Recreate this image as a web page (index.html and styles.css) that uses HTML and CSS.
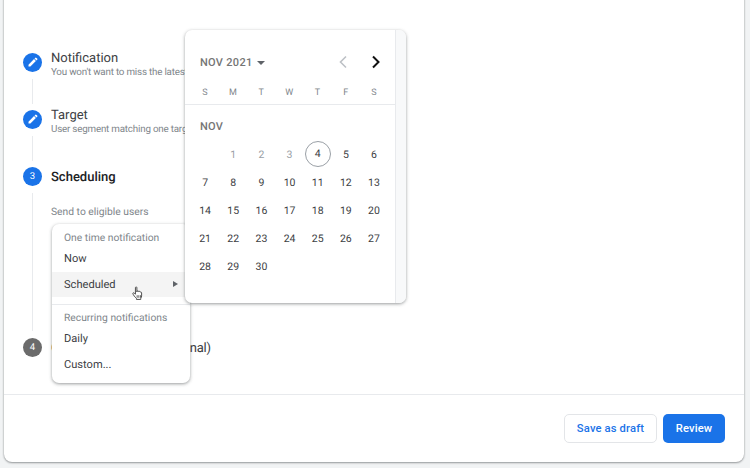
FILE: index.html
```html
<!DOCTYPE html>
<html lang="en">
<head>
<meta charset="utf-8">
<title>Scheduling</title>
<link rel="stylesheet" href="styles.css">
</head>
<body>
<main class="card">
  <section class="stepper">
    <div class="step">
      <div class="rail">
        <span class="dot"><svg class="pencil" viewBox="0 0 24 24"><path d="M3 17.25V21h3.75L17.81 9.94l-3.75-3.75L3 17.25zM20.71 7.04a1 1 0 0 0 0-1.41l-2.34-2.34a1 1 0 0 0-1.41 0l-1.83 1.83 3.75 3.75 1.83-1.83z"/></svg></span>
        <span class="line line-a"></span>
      </div>
      <div class="body">
        <div class="title">Notification</div>
        <div class="sub">You won't want to miss the latest updates from our team</div>
      </div>
    </div>
    <div class="step">
      <div class="rail">
        <span class="dot"><svg class="pencil" viewBox="0 0 24 24"><path d="M3 17.25V21h3.75L17.81 9.94l-3.75-3.75L3 17.25zM20.71 7.04a1 1 0 0 0 0-1.41l-2.34-2.34a1 1 0 0 0-1.41 0l-1.83 1.83 3.75 3.75 1.83-1.83z"/></svg></span>
        <span class="line line-a"></span>
      </div>
      <div class="body">
        <div class="title">Target</div>
        <div class="sub">User segment matching one target audience</div>
      </div>
    </div>
    <div class="step">
      <div class="rail">
        <span class="dot">3</span>
        <span class="line line-b"></span>
      </div>
      <div class="body">
        <div class="title title-strong">Scheduling</div>
        <div class="send">Send to eligible users</div>
      </div>
    </div>
    <div class="step">
      <div class="rail">
        <span class="dot dot-grey">4</span>
      </div>
      <div class="body">
        <div class="title title-last">Conversion events (optional)</div>
      </div>
    </div>
  </section>
  <footer class="actions">
    <button class="btn btn-outline">Save as draft</button>
    <button class="btn btn-primary">Review</button>
  </footer>

  <div class="menu">
    <div class="menu-label">One time notification</div>
    <div class="menu-item">Now</div>
    <div class="menu-item menu-item-active">Scheduled<span class="arrow"></span></div>
    <div class="menu-divider"></div>
    <div class="menu-label">Recurring notifications</div>
    <div class="menu-item">Daily</div>
    <div class="menu-item">Custom...</div>
  </div>

  <svg class="hand" viewBox="0 0 14 17"><path d="M4 1.600c0-1 1.700-1 1.700 0v5l.3-1c.9-.5 1.700-.2 1.700.6.800-.5 1.700-.2 1.800.7.800-.4 1.700 0 1.700.9v3.500c0 1.400-.6 2.300-1 3.100v1H5.200v-1C4 13 3 12.200 1.800 10.200 1 9 .7 8.200 1.300 7.800c.6-.4 1.300.1 2.700 1.600z" fill="#fff" stroke="#333" stroke-width="1" stroke-linejoin="round"/><path d="M6 10.500v3M8 10.500v3M10 10.500v3" stroke="#333" stroke-width=".9" fill="none"/></svg>

  <div class="calendar">
    <div class="cal-main">
      <div class="cal-head">
        <span class="cal-month">NOV 2021</span><span class="caret"></span>
        <svg class="chev chev-prev" viewBox="0 0 10 14"><path d="M8 1.500 2.500 7 8 12.500" fill="none" stroke="#bdc1c6" stroke-width="1.600"/></svg>
        <svg class="chev chev-next" viewBox="0 0 10 14"><path d="M2 1.500 7.500 7 2 12.500" fill="none" stroke="#111" stroke-width="2"/></svg>
      </div>
      <div class="cal-grid cal-week">
        <span>S</span><span>M</span><span>T</span><span>W</span><span>T</span><span>F</span><span>S</span>
      </div>
      <div class="cal-rule"></div>
      <div class="cal-label">NOV</div>
      <div class="cal-grid cal-days">
        <span></span><span class="past">1</span><span class="past">2</span><span class="past">3</span><span class="today">4</span><span>5</span><span>6</span>
        <span>7</span><span>8</span><span>9</span><span>10</span><span>11</span><span>12</span><span>13</span>
        <span>14</span><span>15</span><span>16</span><span>17</span><span>18</span><span>19</span><span>20</span>
        <span>21</span><span>22</span><span>23</span><span>24</span><span>25</span><span>26</span><span>27</span>
        <span>28</span><span>29</span><span>30</span>
      </div>
    </div>
    <div class="cal-scroll"></div>
  </div>
</main>
</body>
</html>
```
FILE: styles.css
```css
* { box-sizing: border-box; }
html, body { margin: 0; height: 468px; overflow: hidden; }
body {
  background: #f1f3f4;
  font-family: Roboto, "Liberation Sans", sans-serif;
  color: #3c4043;
  text-rendering: geometricPrecision;
}
.card {
  position: relative;
  width: 740px;
  height: 482px;
  margin: -20px 0 0 4px;
  background: #fff;
  border-radius: 8px;
  box-shadow: 0 1px 2px rgba(60,64,67,.45), 0 0 2px rgba(60,64,67,.25);
  display: flex;
  flex-direction: column;
}
.stepper {
  flex: 1;
  padding: 72.500px 0 0 19px;
}
.step { display: flex; gap: 9px; }
.rail { width: 19px; display: flex; flex-direction: column; align-items: center; }
.dot {
  width: 19px;
  height: 19px;
  border-radius: 50%;
  background: #1a73e8;
  color: #fff;
  font-size: 9.500px;
  display: flex;
  align-items: center;
  justify-content: center;
  flex: none;
}
.dot-grey { background: #6b6b6b; }
.pencil { width: 12px; height: 12px; fill: #fff; }
.line { width: 1.500px; background: #e8eaed; }
.line-a { height: 25px; margin: 7.500px 0 5.500px; }
.line-b { height: 138px; margin: 7px 0; }
.body { min-width: 0; }
.title { font-size: 13px; line-height: 15px; color: #3c4043; margin-top: -2px; }
.title-strong { font-weight: 500; color: #202124; margin-top: 3px; }
.title-last { margin-top: 3px; letter-spacing: -.2px; }
.sub { font-size: 9.800px; letter-spacing: -.2px; line-height: 13px; color: #80868b; white-space: nowrap; }
.send { font-size: 10.300px; line-height: 13px; color: #80868b; margin-top: 20px; white-space: nowrap; }
.actions {
  height: 68px;
  padding: 19px 19px 0 0;
  border-top: 1px solid #e8eaed;
  display: flex;
  justify-content: flex-end;
  gap: 6px;
  flex: none;
}
.btn {
  height: 29px;
  border-radius: 5px;
  font: 500 11.200px Roboto, "Liberation Sans", sans-serif;
  letter-spacing: .15px;
  padding: 0;
}
.btn-outline { width: 93px; background: #fff; color: #1a73e8; border: 1px solid #e3e5e8; }
.btn-primary { width: 62px; background: #1a73e8; color: #fff; border: 0; }

.menu {
  position: absolute;
  left: 47.500px;
  top: 244px;
  width: 138.500px;
  height: 158.500px;
  background: #fff;
  border-radius: 7px;
  box-shadow: 0 1px 3px rgba(60,64,67,.4), 0 1px 4px rgba(60,64,67,.15);
  padding-top: 7px;
  font-size: 11.100px;
}
.menu-label { height: 14px; line-height: 14px; padding-left: 12.500px; font-size: 10.300px; color: #80868b; }
.menu-item { height: 25.500px; line-height: 25.500px; padding-left: 12.500px; color: #3c4043; position: relative; }
.menu-label + .menu-item { margin-top: 1px; }
.menu-item-active { background: #f4f4f4; }
.arrow {
  position: absolute;
  right: 12px;
  top: 9px;
  border-left: 5px solid #5f6368;
  border-top: 3.500px solid transparent;
  border-bottom: 3.500px solid transparent;
}
.menu-divider { height: 1px; background: #e8eaed; margin: 7px 0 6px; }
.hand { position: absolute; left: 128px; top: 306px; width: 12px; height: 15px; }

.calendar {
  position: absolute;
  left: 181px;
  top: 50px;
  width: 221px;
  height: 273px;
  background: #fff;
  border-radius: 7px;
  box-shadow: 0 1px 3px rgba(60,64,67,.4), 0 1px 4px rgba(60,64,67,.15);
  display: flex;
  overflow: hidden;
}
.cal-main { flex: 1; min-width: 0; }
.cal-scroll { width: 11px; background: #f8f9fa; border-left: 1px solid #e8eaed; }
.cal-head { position: relative; height: 52px; padding: 26px 0 0 15px; display: flex; align-items: flex-start; }
.cal-month { font-size: 11px; font-weight: 500; line-height: 14px; color: #757575; letter-spacing: .3px; }
.caret {
  margin: 5px 0 0 4px;
  border-top: 4px solid #5f6368;
  border-left: 4px solid transparent;
  border-right: 4px solid transparent;
}
.chev { position: absolute; top: 25px; width: 10px; height: 14px; }
.chev-prev { left: 153px; }
.chev-next { left: 186px; }
.cal-grid {
  display: grid;
  grid-template-columns: repeat(7, 28.170px);
  padding-left: 6px;
  text-align: center;
}
.cal-week { height: 22px; line-height: 22px; font-size: 9px; color: #80868b; letter-spacing: .4px; }
.cal-rule { height: 1px; background: #e8eaed; }
.cal-label { height: 35px; padding: 15px 0 0 15px; font-size: 11px; line-height: 14px; font-weight: 500; color: #757575; letter-spacing: .3px; }
.cal-days { grid-auto-rows: 28.200px; font-size: 10.500px; color: #3c4043; align-items: center; justify-items: center; }
.past { color: #9aa0a6; }
.today {
  width: 26px;
  height: 26px;
  line-height: 24px;
  border: 1px solid #9aa0a6;
  border-radius: 50%;
}
```
